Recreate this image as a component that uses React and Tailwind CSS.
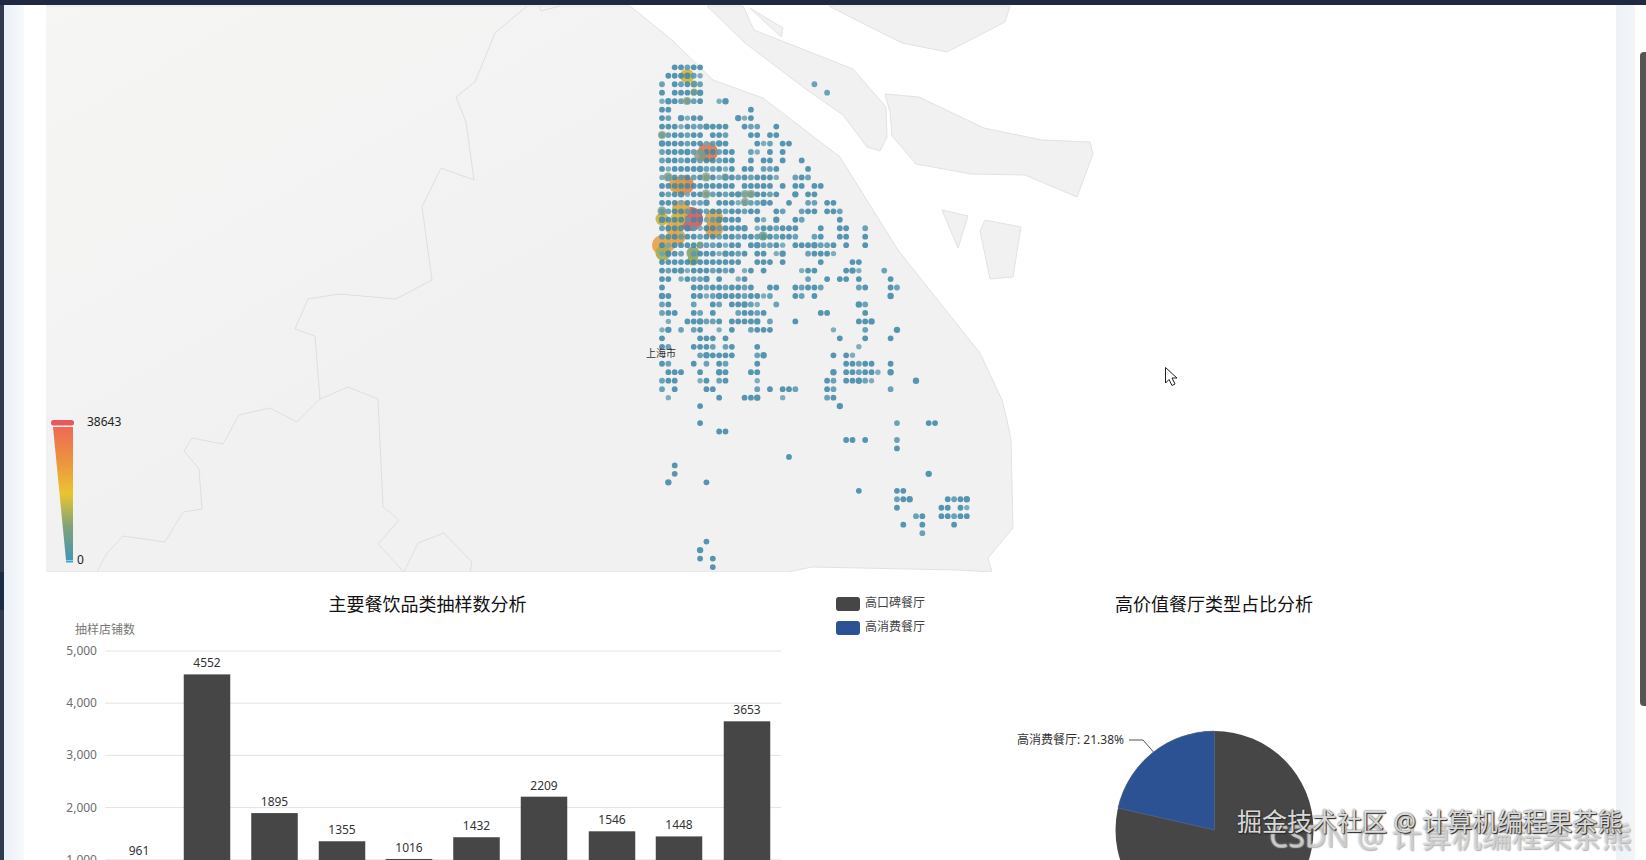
const FONT = "'Noto Sans', 'Noto Sans CJK SC', sans-serif"

// ─── Map shapes (page pixel coordinates) ─────────────────────────────────────
const LAND = '30,6 630,6 672,40 713,80 763,98 840,157 898,250 980,353 1002,400 1007,420 1011,440 1013,528 988,558 992,572 957,570 812,567 788,572 30,572'
const ISLANDS = [
  '707,6 745,43 807,90 843,115 867,147 880,151 887,137 886,107 853,69 754,30 743,6',
  '750,8 783,28 781,37',
  '829,6 860,22 902,43 947,52 1005,22 1010,6',
  '885,94 919,97 984,128 1042,140 1090,142 1093,154 1077,197 1025,175 971,174 916,164 892,136 890,112',
  '942,210 968,216 958,248',
  '985,220 1021,227 1013,277 990,279 980,231',
]
const BORDERS = [
  '527,6 495,33 475,82 456,97 466,122 474,180 441,168 422,207 432,280 396,299 339,294 308,299 295,329 315,336 320,399 348,387 378,399 383,507 399,520 378,544 404,572',
  '320,399 297,422 270,408 239,415 223,444 192,438 184,451 199,469 202,509 183,512 165,542 123,536 107,553 97,572',
  '404,572 418,543 444,533 472,562 470,572',
  '539,6 541,11 560,6',
]

// one entry per grid row, each entry lists the occupied grid columns
const DOT_ROWS = [
  '2-6', '1-6', '0,2-6,24', '0,2-6,26', '0-6,9,10', '0,1,14', '0,1,3-6,12-14', '0-10,13-15,18',
  '0-6,8-10,14,15,17,18', '0-10,15-17,19,20', '0-11,14,15,17,19', '0-11,14,16,17,19,22',
  '0-11,13,14,16-18,23', '0-18,21-23', '0-11,13-17,19,21,22,24,25', '0-18,21,23,24',
  '0-7,9-17,20,23,24,26,27', '0-15,18,19,22-24,26-28', '0-12,15,16,18,21,22,28',
  '0-13,15-21,25,28,29,32', '0-21,24,25,28,29,32', '0-12,14-19,21-27,29,32',
  '0-3,5-13,15,16,18,19,23-27', '0-12,15-17,19,25,30,31', '0-11,13,14,16,22-24,29-31,35',
  '0,1,3-7,9,12,13,23,26,28,29,31,36', '0,5-14,17,18,21-25,31,32,36,37', '0,1,5-17,21,22,24,36',
  '0,1,5,8,9,11-15,18,31,32', '0-2,5,6,8,12-16,25,26,32', '1,4-9,11-15,17,21,31-33',
  '0,1,3,5,6,9,11,14-17,27,32,37', '0,6-8,10,28,32,36', '0,1,5-8,10,11,15,31', '6-11,15,16,27,29,30',
  '0,1,5,7,9,10,15,29-33,36', '1-3,6,9,10,14,15,27,29-34,36', '0-2,6,7,9,10,15,26,27,29-33,40',
  '0,2,7,8,15,17,19-21,26,27,36', '1,9,13-15,19,26,27', '6,28', '', '6,37,42,43', '9,10', '29,30,32,37',
  '37', '20', '2', '2,42', '1,7', '31,37,38', '37-39,45-48', '37,44,45,47,48', '40,41,44-48', '38,41,46',
  '41', '7', '6', '6,8', '8',
]

function expandRow(row) {
  if (!row) return []
  return row.split(',').flatMap(part => {
    const [a, b] = part.split('-').map(Number)
    if (b === undefined) return [a]
    return Array.from({ length: b - a + 1 }, (_, i) => a + i)
  })
}

const DOTS = DOT_ROWS.flatMap((row, r) =>
  expandRow(row).map(c => {
    const seed = (r * 7 + c * 13 + r * c) % 9
    return {
      x: 662 + c * 6.35,
      y: 67.3 + r * 8.47,
      r: seed === 0 ? 3.2 : seed === 1 ? 2.7 : 2.9,
      fill: seed === 1 ? '#6fa5b6' : seed === 5 || seed === 7 ? '#5898b0' : '#4189a8',
    }
  })
)

// hot spots on the heat map: [x, y, radius, colour]
const HOT_UNDER = [
  [708, 152, 10, '#e0764f'], [684, 185, 10, '#e5873f'], [677, 185, 8, '#e3a040'],
  [691, 219, 12, '#d9595a'], [681, 209, 9, '#e2a83c'], [662, 219, 6.5, '#cfb23a'],
  [678, 219, 7.5, '#d7b43a'], [673, 228, 7.5, '#e3a842'], [714, 218, 9, '#e0a83e'],
  [714, 229, 9, '#e49a3f'], [678, 237, 7.5, '#e5a43f'], [662, 245, 10, '#e7a24a'],
  [668, 245, 7, '#e6a84a'], [663, 253, 7.5, '#a9ad4f'], [693, 253, 6.5, '#8ba46a'],
  [687, 76, 7, '#d8b43a'], [693, 260, 5.5, '#9aa95c'],
]
const HOT_OVER = [
  [694, 84, 3.5, '#6f9c8c'], [694, 92, 3.5, '#6f9c8c'], [687, 101, 4, '#829f8a'],
  [662, 135, 4, '#7fa08b'], [700, 155, 6, '#7e9a82'], [668, 177, 4.5, '#7fa08b'],
  [706, 177, 4.5, '#8aa184'], [725, 177, 3.5, '#5f9a9f'], [706, 194, 4.5, '#8aa184'],
  [745, 194, 4, '#7fa08b'], [751, 194, 4, '#7fa08b'], [745, 202, 4, '#7fa08b'],
  [662, 211, 4.5, '#6f9c8c'], [763, 236, 4.5, '#5f9a8c'], [700, 245, 3.5, '#7f9f8b'],
]

const BARS = [
  { x: 139, value: 961 }, { x: 207, value: 4552 }, { x: 274.5, value: 1895 }, { x: 342, value: 1355 },
  { x: 409, value: 1016 }, { x: 476.5, value: 1432 }, { x: 544, value: 2209 }, { x: 612, value: 1546 },
  { x: 679, value: 1448 }, { x: 747, value: 3653 },
]
const TICKS = [5000, 4000, 3000, 2000, 1000]
const barY = v => 651 + (5000 - v) * 0.0522

function MapChart() {
  return (
    <svg className="block w-[1570px] h-[567px] shrink-0" viewBox="46 5 1570 567" style={{ fontFamily: FONT }}>
      <defs>
        <linearGradient id="legendRamp" x1="0" y1="0" x2="0" y2="1">
          <stop offset="0" stopColor="#ee6a55" />
          <stop offset="0.25" stopColor="#ec9240" />
          <stop offset="0.5" stopColor="#e9c52f" />
          <stop offset="0.75" stopColor="#7fa379" />
          <stop offset="1" stopColor="#4497b4" />
        </linearGradient>
        <linearGradient id="landFade" x1="0" y1="0" x2="0.5" y2="0.5">
          <stop offset="0" stopColor="#f6f6f5" />
          <stop offset="1" stopColor="#f1f1f1" />
        </linearGradient>
      </defs>

      <polygon points={LAND} fill="url(#landFade)" stroke="#e2e2e2" strokeWidth="1" />
      {ISLANDS.map(p => (
        <polygon key={p} points={p} fill="#f1f1f1" stroke="#e2e2e2" strokeWidth="1" />
      ))}
      {BORDERS.map(p => (
        <polyline key={p} points={p} fill="none" stroke="#dfdfdf" strokeWidth="1" />
      ))}

      {HOT_UNDER.map(([x, y, r, fill]) => (
        <circle key={`${x}-${y}-${r}`} cx={x} cy={y} r={r} fill={fill} opacity="0.92" />
      ))}
      <g opacity="0.88">
        {DOTS.map(d => (
          <circle key={`${d.x}-${d.y}`} cx={d.x} cy={d.y} r={d.r} fill={d.fill} />
        ))}
      </g>
      {HOT_OVER.map(([x, y, r, fill]) => (
        <circle key={`${x}-${y}-${r}`} cx={x} cy={y} r={r} fill={fill} opacity="0.8" />
      ))}

      <text x="661" y="357" fontSize="10" textAnchor="middle" fill="#333">上海市</text>

      {/* visual map legend */}
      <rect x="51" y="420" width="23" height="5.5" rx="2.5" fill="#e8595c" />
      <polygon points="53,427 73,427 73,560 66,560" fill="url(#legendRamp)" />
      <rect x="66" y="560.5" width="7" height="2" fill="#39a7d0" />
      <text x="87" y="426" fontSize="12" fill="#222">38643</text>
      <text x="77" y="564" fontSize="12" fill="#222">0</text>

      {/* mouse cursor */}
      <path d="M1165.5 367.5 L1165.5 383 L1169 379.5 L1172 385.5 L1175 384 L1172 378 L1177 378 Z" fill="#fff" stroke="#222" strokeWidth="1" strokeLinejoin="round" />
    </svg>
  )
}

function BarChart() {
  return (
    <svg className="block w-[770px] h-[283px] shrink-0" viewBox="46 577 770 283" style={{ fontFamily: FONT }}>
      <text x="427.5" y="611" fontSize="18" textAnchor="middle" fill="#111">主要餐饮品类抽样数分析</text>
      <text x="75" y="634" fontSize="12" fill="#777">抽样店铺数</text>

      {TICKS.map(t => (
        <g key={t}>
          <line x1="105" x2="781" y1={barY(t)} y2={barY(t)} stroke="#e3e3e3" />
          <text x="97" y={barY(t) + 4} fontSize="12" textAnchor="end" fill="#6e6e6e">{t.toLocaleString('en-US')}</text>
        </g>
      ))}

      {BARS.map(b => (
        <g key={b.x}>
          <rect x={b.x - 23.25} y={barY(b.value)} width="46.5" height="200" fill="#464646" />
          <text x={b.x} y={barY(b.value) - 7} fontSize="12" textAnchor="middle" fill="#333">{b.value}</text>
        </g>
      ))}
    </svg>
  )
}

function PieChart() {
  return (
    <svg className="block w-[800px] h-[283px] shrink-0" viewBox="816 577 800 283" style={{ fontFamily: FONT }}>
      <text x="1214" y="611" fontSize="18" textAnchor="middle" fill="#111">高价值餐厅类型占比分析</text>

      <rect x="836" y="597" width="24" height="14" rx="3" fill="#464646" />
      <text x="865" y="607" fontSize="12" fill="#444">高口碑餐厅</text>
      <rect x="836" y="621" width="24" height="14" rx="3" fill="#2c5293" />
      <text x="865" y="631" fontSize="12" fill="#444">高消费餐厅</text>

      <circle cx="1214.5" cy="830" r="99" fill="#464646" />
      <path d="M1214.5 830 L1214.5 731 A99 99 0 0 0 1118 808 Z" fill="#2c5293" stroke="#5f6f8f" strokeWidth="0.6" />

      <polyline points="1129,740 1143,740 1153.5,752" fill="none" stroke="#555" />
      <text x="1017" y="744" fontSize="12" fill="#333">高消费餐厅: 21.38%</text>
    </svg>
  )
}

export default function App() {
  return (
    <div className="relative flex flex-col w-[1646px] h-[860px] overflow-hidden bg-white" style={{ fontFamily: FONT }}>
      <div className="h-[5px] shrink-0 bg-[#1f2a42]" />

      <div className="flex flex-1 min-h-0">
        {/* dark page behind the window */}
        <div className="flex flex-col w-[4px] shrink-0 bg-[#303b52]">
          <div className="h-[567px] shrink-0" />
          <div className="h-[38px] shrink-0 bg-[#1c2b45]" />
        </div>
        <div className="w-[20px] shrink-0 bg-linear-to-r from-[#e9f0f7] to-[#f7f9fc]" />

        {/* white panel */}
        <div className="flex flex-col w-[1592px] shrink-0 pl-[22px] bg-white">
          <MapChart />
          <div className="h-[5px] shrink-0" />
          <div className="flex">
            <BarChart />
            <PieChart />
          </div>
        </div>

        <div className="w-[19px] shrink-0 bg-linear-to-r from-[#edf2f7] to-[#f3f6f9]" />

        {/* scrollbar */}
        <div className="flex flex-col w-[11px] shrink-0 pl-[5px] pt-[47px] bg-white">
          <div className="h-[654px] w-[6px] rounded-tl-[4px] rounded-bl-[4px] bg-[#555555]" />
        </div>
      </div>

      {/* video watermarks */}
      <div className="absolute left-[1269px] top-[816px] text-[30px] leading-[40px] whitespace-nowrap text-white/40 [text-shadow:0_0_2px_#aaa,1px_1px_1px_#bbb]">
        CSDN @ 计算机编程果茶熊
      </div>
      <div className="absolute left-[1237px] top-[804px] text-[25px] leading-[34px] whitespace-nowrap text-[#efefef]/90 [text-shadow:0_0_2px_#333,1px_1px_1px_#222]">
        掘金技术社区 @ 计算机编程果茶熊
      </div>
    </div>
  )
}
